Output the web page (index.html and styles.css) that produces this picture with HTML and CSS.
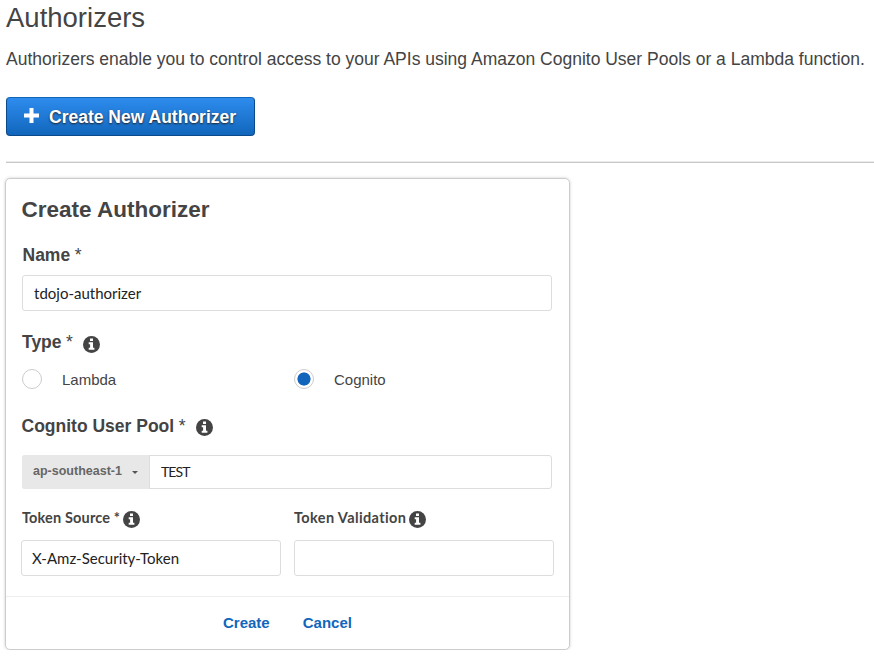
FILE: index.html
```html
<!DOCTYPE html>
<html lang="en">
<head>
<meta charset="utf-8">
<title>Authorizers</title>
<link rel="stylesheet" href="styles.css">
</head>
<body>
<svg class="defs" width="0" height="0">
  <symbol id="info" viewBox="0 0 17 17">
    <circle cx="8.5" cy="8.5" r="8.5" fill="#444"/>
    <path d="M7 2.5h3v2.4H7zM5.7 6.2H10v5.6h1.4v2H5.7v-2h1.4V8.2H5.7z" fill="#fff"/>
  </symbol>
</svg>
<header class="page-head">
  <h1>Authorizers</h1>
  <p>Authorizers enable you to control access to your APIs using Amazon Cognito User Pools or a Lambda function.</p>
  <button class="primary" type="button">
    <svg class="plus" viewBox="0 0 15 15"><path d="M5.5 0h4v5.5H15v4H9.5V15h-4V9.5H0v-4h5.5z" fill="#fff"/></svg>
    <span>Create New Authorizer</span>
  </button>
</header>
<main class="card">
  <div class="card-body">
    <h2>Create Authorizer</h2>
    <div class="label name-label"><b>Name</b><i>*</i></div>
    <div class="field name-field">tdojo-authorizer</div>
    <div class="label type-label"><b>Type</b><i>*</i><svg class="info"><use href="#info"/></svg></div>
    <div class="radios">
      <div class="option"><span class="radio"></span><span>Lambda</span></div>
      <div class="option"><span class="radio checked"></span><span>Cognito</span></div>
    </div>
    <div class="label pool-label"><b>Cognito User Pool</b><i>*</i><svg class="info"><use href="#info"/></svg></div>
    <div class="combo">
      <div class="region"><span>ap-southeast-1</span><span class="caret"></span></div>
      <div class="pool">TEST</div>
    </div>
    <div class="tokens">
      <div class="token">
        <div class="token-label"><span class="source">Token Source *</span><svg class="info"><use href="#info"/></svg></div>
        <div class="field">X-Amz-Security-Token</div>
      </div>
      <div class="token">
        <div class="token-label"><span class="validation">Token Validation</span><svg class="info"><use href="#info"/></svg></div>
        <div class="field"></div>
      </div>
    </div>
  </div>
  <footer class="actions"><a class="create">Create</a><a>Cancel</a></footer>
</main>
</body>
</html>
```
FILE: styles.css
```css
* { box-sizing: border-box; }
body { margin: 0; background: #fff; color: #444; font-family: "Liberation Sans", Arial, sans-serif; overflow: hidden; }
.defs { display: block; }
.page-head { margin-left: 6px; height: 163px; border-bottom: 1px solid #c8c8c8; box-shadow: inset 0 -1px 0 #ebebeb; }
h1 { margin: 0; font-size: 27.5px; font-weight: 400; line-height: 35px; }
p { margin: 0 0 14px; font-size: 17.5px; line-height: 48px; white-space: nowrap; }
.primary { display: flex; align-items: center; width: 249px; height: 39px; padding: 0 0 0 16px; border: 1px solid #0a4a8c; border-top-color: #1166bb; border-radius: 4px; background: linear-gradient(#2e8cee, #1166bb); color: #fff; font: bold 17.5px/37px "Liberation Sans", Arial, sans-serif; text-shadow: 0 1px 2px #222; white-space: nowrap; }
.primary span { padding-top: 1px; }
.plus { width: 15px; height: 15px; margin: -3px 10.5px 0 0.5px; }
.card { width: 565px; height: 472px; margin: 15px 0 0 5px; border: 1px solid #ccc; border-radius: 5px; box-shadow: 0 0 3px #ccc; }
.card-body { height: 418px; padding: 14px 15px 0 16px; border-bottom: 1px solid #eee; }
h2 { margin: 0 0 0 -0.5px; font-size: 22.5px; line-height: 33px; }
.label { display: flex; align-items: center; font-size: 17.5px; line-height: 24px; height: 24px; white-space: nowrap; }
.label i { font-style: normal; margin-left: 4.5px; }
.name-label { margin: 17px 0 8px 0.5px; }
.info { width: 17px; height: 17px; flex: none; }
.label .info { margin: 3px 0 0 10.5px; }
.type-label .info { margin: 4px 0 0 10px; }
.field { height: 36px; padding: 0 11px; border: 1px solid #ddd; border-radius: 3px; color: #222; font: 15px/35px Lato, sans-serif; }
.name-field { width: 530px; }
.type-label { margin-top: 19px; }
.radios { display: grid; grid-template-columns: 272px 1fr; margin-top: 15px; }
.option { display: flex; align-items: center; height: 20px; gap: 20px; font-size: 15px; line-height: 20px; }
.option span + span { padding-top: 2px; }
.radio { width: 20px; height: 20px; border: 1px solid #ccc; border-radius: 50%; }
.checked { background: radial-gradient(circle, #1166bb 6.2px, #fff 6.9px); }
.pool-label { margin: 25px 0 17px -0.5px; }
.combo { display: flex; height: 34px; width: 530px; border: 1px solid #ddd; border-radius: 3px; }
.region { display: flex; width: 128px; padding-left: 11px; margin: -1px 0 -1px -1px; border-radius: 3px 0 0 3px; background: #e8e8e8; border-right: 1px solid #ddd; color: #666; font-weight: bold; font-size: 12.5px; line-height: 32px; }
.caret { width: 0; height: 0; margin: 16px 0 0 10.5px; border: 3.5px solid transparent; border-top-color: #555; border-bottom: 0; }
.pool { padding-left: 11px; color: #222; font: 14px/32px Lato, sans-serif; letter-spacing: -0.9px; }
.tokens { display: grid; grid-template-columns: 260px 260px; gap: 13px; margin: 19px 0 0 -1px; }
.token-label { display: flex; align-items: center; height: 20px; margin-bottom: 12px; padding-left: 1px; font: bold 14.5px/20px Lato, sans-serif; white-space: nowrap; }
.token-label .info { margin: 3px 0 0 3px; }
.source { letter-spacing: 0.15px; }
.token-label .validation { margin-left: -1px; letter-spacing: 0.38px; }
.tokens .field { padding-left: 10px; }
.actions { display: flex; gap: 33px; padding-left: 217px; font-size: 15px; font-weight: bold; line-height: 52px; color: #1166bb; }
```
